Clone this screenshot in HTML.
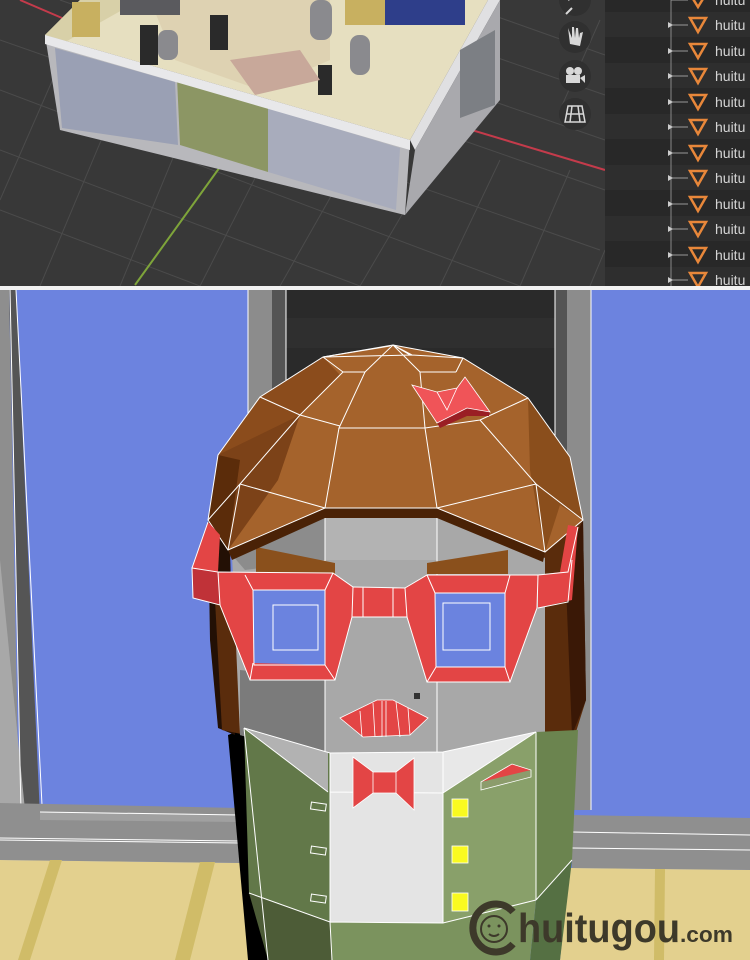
<!DOCTYPE html>
<html><head><meta charset="utf-8"><style>
html,body{margin:0;padding:0;background:#fff;}
svg{display:block}
text{font-family:"Liberation Sans",sans-serif}
</style></head><body>
<svg width="750" height="960" viewBox="0 0 750 960" xmlns="http://www.w3.org/2000/svg">
<!-- ===== TOP PANEL ===== -->
<rect x="0" y="0" width="750" height="286" fill="#383838"/>
<g stroke="#4b4b4b" stroke-width="1">
<path d="M0 40 L600 250 M0 90 L520 286 M0 150 L360 286 M0 210 L200 286 M60 0 L605 190 M200 0 L605 140 M330 0 L605 95 M450 0 L605 55"/>
<path d="M40 286 L160 0 M120 286 L230 20 M200 286 L300 90 M280 286 L380 110 M360 286 L440 150 M440 286 L500 160 M520 286 L570 170 M590 286 L605 250 M0 200 L70 40 M560 110 L600 20"/>
</g>
<path d="M20 0 L62 18" stroke="#c43b4b" stroke-width="2"/>
<path d="M455 125 L605 170" stroke="#c43b4b" stroke-width="2"/>
<path d="M135 285 L225 160" stroke="#7ea43a" stroke-width="2"/>
<!-- room -->
<polygon points="45,35 80,0 488,0 410,140" fill="#e6dfc0"/>
<polygon points="45,35 80,0 140,0 60,45" fill="#d8d0a8"/>
<polygon points="150,0 330,0 330,60 260,90 175,60" fill="#d9c9a8" opacity=".6"/>
<polygon points="45,35 410,140 405,215 60,130" fill="#b8b8bc"/>
<polygon points="55,48 175,82 178,145 62,128" fill="#9aa0b4"/>
<polygon points="268,108 400,148 396,210 268,172" fill="#a8acbc"/>
<polygon points="177,78 268,105 268,172 180,145" fill="#8c9664"/>
<polygon points="45,35 410,140 410,150 45,44" fill="#e8e8ea"/>
<polygon points="410,140 488,0 500,0 415,150" fill="#e0e0e2"/>
<polygon points="415,150 500,0 500,100 405,215" fill="#a9a9ad"/>
<polygon points="460,50 495,30 495,105 460,118" fill="#7c7f84"/>
<rect x="385" y="0" width="80" height="25" fill="#2e3e8a"/>
<g fill="#2a2a2a"><rect x="140" y="25" width="18" height="40"/><rect x="210" y="15" width="18" height="35"/><rect x="318" y="65" width="14" height="30"/></g>
<g fill="#8a8a8e"><rect x="158" y="30" width="20" height="30" rx="8"/><rect x="350" y="35" width="20" height="40" rx="9"/><rect x="310" y="0" width="22" height="40" rx="9"/></g>
<g fill="#c8b060"><rect x="72" y="2" width="28" height="35"/><rect x="345" y="0" width="40" height="25"/></g>
<polygon points="230,60 300,50 320,80 255,95" fill="#c8a89a"/>
<rect x="120" y="0" width="60" height="15" fill="#5a5a5e"/>
<!-- toolbar icons -->
<g fill="#303030"><circle cx="575" cy="0" r="16"/><circle cx="575" cy="37" r="16"/><circle cx="575" cy="76" r="16"/><circle cx="575" cy="114" r="16"/></g>
<g fill="#d8d8d8"><path d="M568 28 L570 44 L580 46 L583 32 L580 33 L579 38 L578 28 L576 28 L575 38 L574 27 L572 27 L572 38 Z"/><circle cx="570" cy="71" r="4"/><circle cx="578" cy="71" r="4"/><rect x="566" y="75" width="14" height="8"/><polygon points="580,78 585,75 585,83"/></g>
<path d="M568 106 L582 106 L585 122 L565 122 Z M566 114 L584 114 M572 106 L570 122 M578 106 L580 122" stroke="#d8d8d8" stroke-width="1.5" fill="none"/>
<path d="M568 0 L578 -6 M572 8 L566 14" stroke="#d8d8d8" stroke-width="2"/>
<!-- sidebar -->
<rect x="605" y="0" width="145" height="286" fill="#282828"/>
<g fill="#2e2e2e"><rect x="605" y="12" width="145" height="25"/><rect x="605" y="63" width="145" height="25"/><rect x="605" y="114" width="145" height="25"/><rect x="605" y="165" width="145" height="25"/><rect x="605" y="216" width="145" height="25"/><rect x="605" y="267" width="145" height="19"/></g>
<line x1="671" y1="0" x2="671" y2="286" stroke="#888" stroke-width="1"/>
<g fill="none" stroke="#e8873a" stroke-width="2.5">
<path d="M690 -6 L706 -6 L698 7 Z"/><path d="M690 18 L706 18 L698 32 Z"/><path d="M690 44 L706 44 L698 58 Z"/><path d="M690 69 L706 69 L698 83 Z"/><path d="M690 95 L706 95 L698 109 Z"/><path d="M690 120 L706 120 L698 134 Z"/><path d="M690 146 L706 146 L698 160 Z"/><path d="M690 171 L706 171 L698 185 Z"/><path d="M690 197 L706 197 L698 211 Z"/><path d="M690 222 L706 222 L698 236 Z"/><path d="M690 248 L706 248 L698 262 Z"/><path d="M690 273 L706 273 L698 287 Z"/>
</g>
<g stroke="#999" stroke-width="1"><path d="M671 0 H688 M671 25 H688 M671 51 H688 M671 76 H688 M671 102 H688 M671 127 H688 M671 153 H688 M671 178 H688 M671 204 H688 M671 229 H688 M671 255 H688 M671 280 H688"/></g>
<g fill="#ccc"><path d="M668 22 L673 25 L668 28Z M668 48 L673 51 L668 54Z M668 73 L673 76 L668 79Z M668 99 L673 102 L668 105Z M668 124 L673 127 L668 130Z M668 150 L673 153 L668 156Z M668 175 L673 178 L668 181Z M668 201 L673 204 L668 207Z M668 226 L673 229 L668 232Z M668 252 L673 255 L668 258Z M668 277 L673 280 L668 283Z"/></g>
<g fill="#d4d4d4" font-size="14">
<text x="715" y="5">huitu</text><text x="715" y="30">huitu</text><text x="715" y="56">huitu</text><text x="715" y="81">huitu</text><text x="715" y="107">huitu</text><text x="715" y="132">huitu</text><text x="715" y="158">huitu</text><text x="715" y="183">huitu</text><text x="715" y="209">huitu</text><text x="715" y="234">huitu</text><text x="715" y="260">huitu</text><text x="715" y="285">huitu</text>
</g>
<rect x="0" y="286" width="750" height="4" fill="#f2f2f2"/>

<!-- ===== BOTTOM PANEL ===== -->
<rect x="0" y="290" width="750" height="670" fill="#6c83df"/>
<polygon points="0,290 9,290 20,860 0,860" fill="#8e8e8e"/>
<polygon points="9,290 16,290 42,860 22,860" fill="#555"/>
<polygon points="0,560 30,860 0,860" fill="#a8a8a8"/>
<path d="M10 290 L22 860 M16 290 L42 805" stroke="#fff" stroke-width="1"/>
<rect x="248" y="290" width="27" height="520" fill="#8c8c8c"/>
<rect x="272" y="290" width="14" height="520" fill="#545454"/>
<rect x="286" y="290" width="270" height="520" fill="#2a2a2a"/>
<rect x="286" y="318" width="270" height="30" fill="#2f2f2f"/>
<rect x="555" y="290" width="12" height="520" fill="#545454"/>
<rect x="567" y="290" width="24" height="520" fill="#8c8c8c"/>
<path d="M248 290 V810 M286 290 V810 M555 290 V810 M591 290 V810" stroke="#fff" stroke-width="1"/>
<polygon points="0,803 240,808 240,863 0,860" fill="#8f8f8f"/>
<polygon points="40,812 240,815 240,822 40,820" fill="#a0a0a0"/>
<path d="M0 840 L240 843 M0 838 L240 841 M40 812 L240 815" stroke="#fff" stroke-width="1"/>
<polygon points="572,815 750,818 750,870 572,868" fill="#8f8f8f"/>
<path d="M572 832 L750 835 M572 848 L750 850" stroke="#fff" stroke-width="1"/>
<polygon points="0,860 240,863 265,960 0,960" fill="#e3d08e"/>
<polygon points="570,868 750,870 750,960 560,960" fill="#e3d08e"/>
<g fill="#d0bc68"><polygon points="50,860 62,860 30,960 18,960"/><polygon points="200,862 215,862 190,960 175,960"/><polygon points="655,869 665,869 664,960 654,960"/></g>
<polygon points="228,735 246,728 270,960 248,960" fill="#000"/>
<!-- side hair -->
<polygon points="208,520 230,550 235,735 218,728 210,640" fill="#231005"/>
<polygon points="215,600 245,560 246,735 222,730" fill="#5a2c0c"/>
<polygon points="540,552 583,520 586,700 575,735 542,735" fill="#5a2c0c"/>
<polygon points="565,560 583,520 586,700 572,735" fill="#3a1806"/>
<!-- face -->
<polygon points="232,555 325,508 437,508 545,558 545,740 443,760 330,760 240,735" fill="#a8a8a8"/>
<polygon points="240,670 325,680 325,760 240,735" fill="#7b7b7b"/>
<polygon points="325,508 437,508 437,560 325,560" fill="#b3b3b3"/>
<polygon points="232,555 325,510 325,560 245,570" fill="#8c8c8c"/>
<path d="M325 508 V755 M437 508 V755" stroke="#fff" stroke-width="1"/>
<polygon points="256,547 335,563 335,574 256,573" fill="#8a501c"/>
<polygon points="427,563 508,550 508,574 427,574" fill="#8a501c"/>
<!-- hair dome -->
<polygon points="393,345 463,358 528,398 570,457 583,520 545,552 437,508 325,508 228,550 208,520 218,455 260,397 323,357" fill="#a5632c"/>
<polygon points="260,397 300,415 278,480 228,550 208,520 218,455" fill="#7c4218"/>
<polygon points="218,455 260,397 323,357 340,375 300,415" fill="#8b4c1c"/>
<polygon points="208,520 218,455 240,460 228,550" fill="#5b2c0a"/>
<polygon points="528,398 570,457 583,520 560,505 545,552 530,470" fill="#8a4e1c"/>
<polygon points="325,508 437,508 437,518 325,518" fill="#4a2206"/>
<polygon points="228,550 325,508 325,518 232,560" fill="#4a2206"/>
<polygon points="437,508 545,552 543,562 437,518" fill="#4a2206"/>
<g stroke="#fff" stroke-width="1" fill="none">
<path d="M393 345 L463 358 L528 398 L570 457 L583 520 L545 552 L437 508 L325 508 L228 550 L208 520 L218 455 L260 397 L323 357 Z"/>
<path d="M323 357 L390 346 M323 357 L412 355 L463 358 M410 355 L393 345 L412 355 M393 345 L365 372 L343 372 M393 345 L420 372 L456 372 M343 372 L300 415 L340 426 M365 372 L339 428 L425 428 L420 372 M425 428 L480 420 L528 398 M480 420 L536 484 L583 520 M536 484 L437 508 M339 428 L325 508 M425 428 L437 508 M300 415 L240 484 L325 508 M240 484 L208 520 M300 415 L260 397 M536 484 L545 552 M240 484 L228 550 M323 357 L343 372 M463 358 L456 372 M365 372 L343 372 M420 372 L456 372"/>
</g>
<!-- hair bow -->
<polygon points="412,385 437,392 457,388 465,377 490,412 467,408 437,423" fill="#f05458"/>
<polygon points="437,423 467,408 467,416 440,428" fill="#9a1e24"/>
<polygon points="467,408 490,412 489,416 467,416" fill="#9a1e24"/>
<path d="M412 385 L437 392 L457 388 L465 377 L490 412 L467 408 L437 423 Z M437 392 L447 410 L457 388" stroke="#fff" stroke-width="0.8" fill="none"/>
<!-- glasses -->
<polygon points="208,522 220,535 218,572 192,568" fill="#e34545"/>
<polygon points="192,568 218,572 220,605 193,598" fill="#c03238"/>
<polygon points="568,525 578,527 572,600 538,608 538,575 560,572" fill="#e34545"/>
<polygon points="218,572 333,573 353,587 352,617 335,680 250,680 220,605" fill="#e34545"/>
<polygon points="405,588 427,575 538,575 537,608 510,682 427,682 407,617" fill="#e34545"/>
<polygon points="353,587 405,588 407,617 352,617" fill="#e34545"/>
<polygon points="253,590 325,590 325,665 254,663" fill="#6b83df"/>
<polygon points="435,593 505,593 505,667 436,667" fill="#6b83df"/>
<g stroke="#fff" stroke-width="1" fill="none">
<path d="M218 572 L333 573 L353 587 L352 617 L335 680 L250 680 L220 605 Z M192 568 L218 572 L220 605 L193 598 Z M208 522 L192 568"/>
<path d="M405 588 L427 575 L538 575 L537 608 L510 682 L427 682 L407 617 Z M538 575 L568 572 L578 527 M538 608 L568 602 L572 560"/>
<path d="M353 587 L405 588 M352 617 L407 617 M363 587 V617 M393 588 V617"/>
<path d="M253 590 H325 V665 H254 Z M273 605 H318 V650 H273 Z M250 680 L253 663 M335 680 L325 665 M245 575 L253 590 M333 573 L325 590"/>
<path d="M435 593 H505 V667 H436 Z M443 603 H490 V650 H443 Z M427 682 L436 667 M510 682 L505 667 M427 575 L435 593 M510 575 L505 593"/>
</g>
<rect x="414" y="693" width="6" height="6" fill="#333"/>
<polygon points="340,718 377,700 393,700 428,718 410,735 363,737" fill="#e34545"/>
<path d="M340 718 L377 700 L393 700 L428 718 L410 735 L363 737 Z M360 711 L362 737 M373 703 L375 737 M382 701 V737 M386 701 V737 M396 702 L400 737 M408 708 L410 735" stroke="#fff" stroke-width="0.8" fill="none"/>
<!-- body -->
<polygon points="244,728 330,753 330,922 249,893" fill="#627849"/>
<polygon points="249,893 330,922 332,960 268,960" fill="#4d5c37"/>
<polygon points="443,752 536,732 536,900 443,923" fill="#89a06a"/>
<polygon points="536,732 578,730 572,860 536,900" fill="#6b844f"/>
<polygon points="536,900 572,860 560,960 530,960" fill="#557043"/>
<polygon points="330,922 443,923 443,960 332,960" fill="#7b935e"/>
<polygon points="443,923 536,900 530,960 443,960" fill="#7b935e"/>
<polygon points="330,753 443,752 443,923 330,922" fill="#e4e4e4"/>
<polygon points="244,728 328,752 328,792" fill="#b2b2b2"/>
<polygon points="443,752 536,732 443,793" fill="#e8e8e8"/>
<g stroke="#fff" stroke-width="1" fill="none">
<path d="M244 728 L330 753 L443 752 L536 732 M330 753 V922 M443 752 V923 M330 792 L443 793 M244 728 L328 792 M536 732 L443 793 M249 893 L330 922 L443 923 L536 900 M536 732 L536 900 M572 860 L536 900 M244 728 L268 960 M330 922 L332 960"/>
</g>
<polygon points="353,757 373,772 396,772 414,758 414,810 396,793 373,793 353,808" fill="#e34545"/>
<path d="M353 757 L373 772 L396 772 L414 758 L414 810 L396 793 L373 793 L353 808 Z M373 772 V793 M396 772 V793" stroke="#fff" stroke-width="0.8" fill="none"/>
<polygon points="481,782 512,764 531,770 481,790" fill="#e34545"/>
<polygon points="481,782 531,770 531,777 481,790" fill="#8c9c6c"/>
<path d="M481 782 L512 764 L531 770 L531 777 L481 790 Z" stroke="#fff" stroke-width="0.8" fill="none"/>
<g fill="#fafa20" stroke="#fff" stroke-width="0.8"><rect x="452" y="799" width="16" height="18"/><rect x="452" y="846" width="16" height="17"/><rect x="452" y="893" width="16" height="18"/></g>
<g fill="none" stroke="#fff" stroke-width="1"><rect x="311" y="803" width="15" height="7" transform="rotate(8 318 806)"/><rect x="311" y="847" width="15" height="7" transform="rotate(8 318 850)"/><rect x="311" y="895" width="15" height="7" transform="rotate(8 318 898)"/></g>
<!-- logo -->
<g>
<path d="M513 912 A23 24 0 1 0 513 944" stroke="#3d392a" stroke-width="7" fill="none"/>
<circle cx="494" cy="929" r="13" fill="none" stroke="#3d392a" stroke-width="2"/>
<circle cx="489" cy="926" r="1.5" fill="#3d392a"/><circle cx="499" cy="926" r="1.5" fill="#3d392a"/>
<path d="M489 934 Q494 938 499 934" stroke="#3d392a" stroke-width="2" fill="none"/>
<text x="518" y="942" font-size="41" font-weight="bold" fill="#3d392a" textLength="162" lengthAdjust="spacingAndGlyphs">huitugou</text>
<text x="680" y="942" font-size="22" font-weight="bold" fill="#3d392a" textLength="53" lengthAdjust="spacingAndGlyphs">.com</text>
</g>
</svg>
</body></html>
